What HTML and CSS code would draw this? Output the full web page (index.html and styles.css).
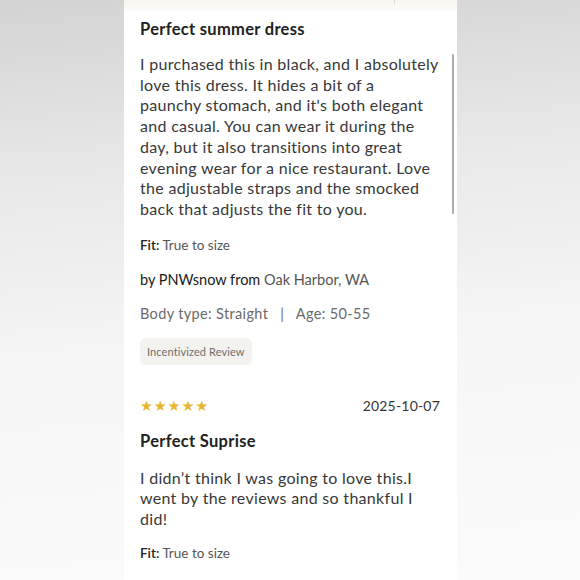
FILE: index.html
```html
<!DOCTYPE html>
<html>
<head>
<meta charset="utf-8">
<link rel="stylesheet" href="styles.css">
</head>
<body>
<div class="page">
  <div class="card">
    <div class="fade-top"><span class="tick"></span></div>
    <div class="review">
      <h2 class="title">Perfect summer dress</h2>
      <p class="body">I purchased this in black, and I absolutely<br>love this dress. It hides a bit of a<br>paunchy stomach, and it's both elegant<br>and casual. You can wear it during the<br>day, but it also transitions into great<br>evening wear for a nice restaurant. Love<br>the adjustable straps and the smocked<br>back that adjusts the fit to you.</p>
      <div class="fit"><span class="label">Fit:</span> True to size</div>
      <div class="author">by PNWsnow from <span class="loc">Oak Harbor, WA</span></div>
      <div class="meta">Body type: Straight <span class="sep">|</span> Age: 50-55</div>
      <span class="badge">Incentivized Review</span>
    </div>
    <div class="review second">
      <div class="head">
        <span class="stars">★★★★★</span>
        <span class="date">2025-10-07</span>
      </div>
      <h2 class="title">Perfect Suprise</h2>
      <p class="body">I didn’t think I was going to love this.I went by the reviews and so thankful I did!</p>
      <div class="fit"><span class="label">Fit:</span> True to size</div>
    </div>
    <div class="scrollbar"></div>
  </div>
</div>
</body>
</html>
```
FILE: styles.css
```css
html, body {
  margin: 0;
  padding: 0;
  height: 100%;
}
body {
  background: linear-gradient(175deg, #d3d3d3 0%, #e9e9e9 30%, #f6f6f6 60%, #fbfbfb 100%);
  font-family: "Lato", "Open Sans", sans-serif;
  overflow: hidden;
}
.page {
  display: flex;
  justify-content: center;
  height: 580px;
}
.card {
  position: relative;
  width: 333px;
  margin-left: 1px;
  background: #ffffff;
  height: 580px;
  overflow: hidden;
}
.fade-top {
  height: 12px;
  background: linear-gradient(180deg, #f8f6ef 0%, #fbfaf6 70%, #ffffff 100%);
  position: relative;
}
.tick {
  position: absolute;
  left: 270px;
  top: 0;
  width: 1px;
  height: 4px;
  background: #d8d8d8;
}
.review {
  padding: 0 17px 0 16px;
}
.title {
  margin: 7px 0 0;
  font-size: 16.5px;
  line-height: 20px;
  font-weight: 700;
  color: #222;
  letter-spacing: 0.3px;
}
.body {
  margin: 15px 0 0;
  font-size: 16px;
  line-height: 20.7px;
  color: #383838;
  letter-spacing: 0.3px;
}
.fit {
  margin-top: 16px;
  font-size: 13.5px;
  line-height: 18px;
  color: #555;
}
.fit .label {
  color: #222;
  font-weight: 600;
}
.author {
  margin-top: 17px;
  font-size: 14.5px;
  line-height: 18px;
  color: #1a1a1a;
  font-weight: 400;
}
.author .loc {
  color: #555;
}
.meta {
  margin-top: 16px;
  font-size: 14.5px;
  line-height: 18px;
  color: #6a6a6a;
  letter-spacing: 0.35px;
}
.meta .sep {
  margin: 0 8px;
}
.badge {
  display: inline-block;
  margin-top: 15px;
  padding: 0 7px;
  height: 27px;
  line-height: 27px;
  border-radius: 6px;
  background: #f4f2ee;
  color: #6e6e6e;
  font-size: 11px;
  letter-spacing: 0.1px;
}
.second .head {
  margin-top: 31px;
  display: flex;
  justify-content: space-between;
  align-items: center;
  height: 20px;
}
.stars {
  color: #e8b62c;
  font-size: 14.5px;
  letter-spacing: 0.8px;
  font-family: "DejaVu Sans", sans-serif;
}
.date {
  font-size: 14px;
  color: #333;
  letter-spacing: 0.2px;
}
.second .title {
  margin-top: 15px;
}
.second .body {
  margin-top: 17px;
}
.second .fit {
  margin-top: 14px;
}
.scrollbar {
  position: absolute;
  left: 328px;
  top: 54px;
  width: 2px;
  height: 160px;
  background: #adadad;
  border-radius: 1px;
}
```
